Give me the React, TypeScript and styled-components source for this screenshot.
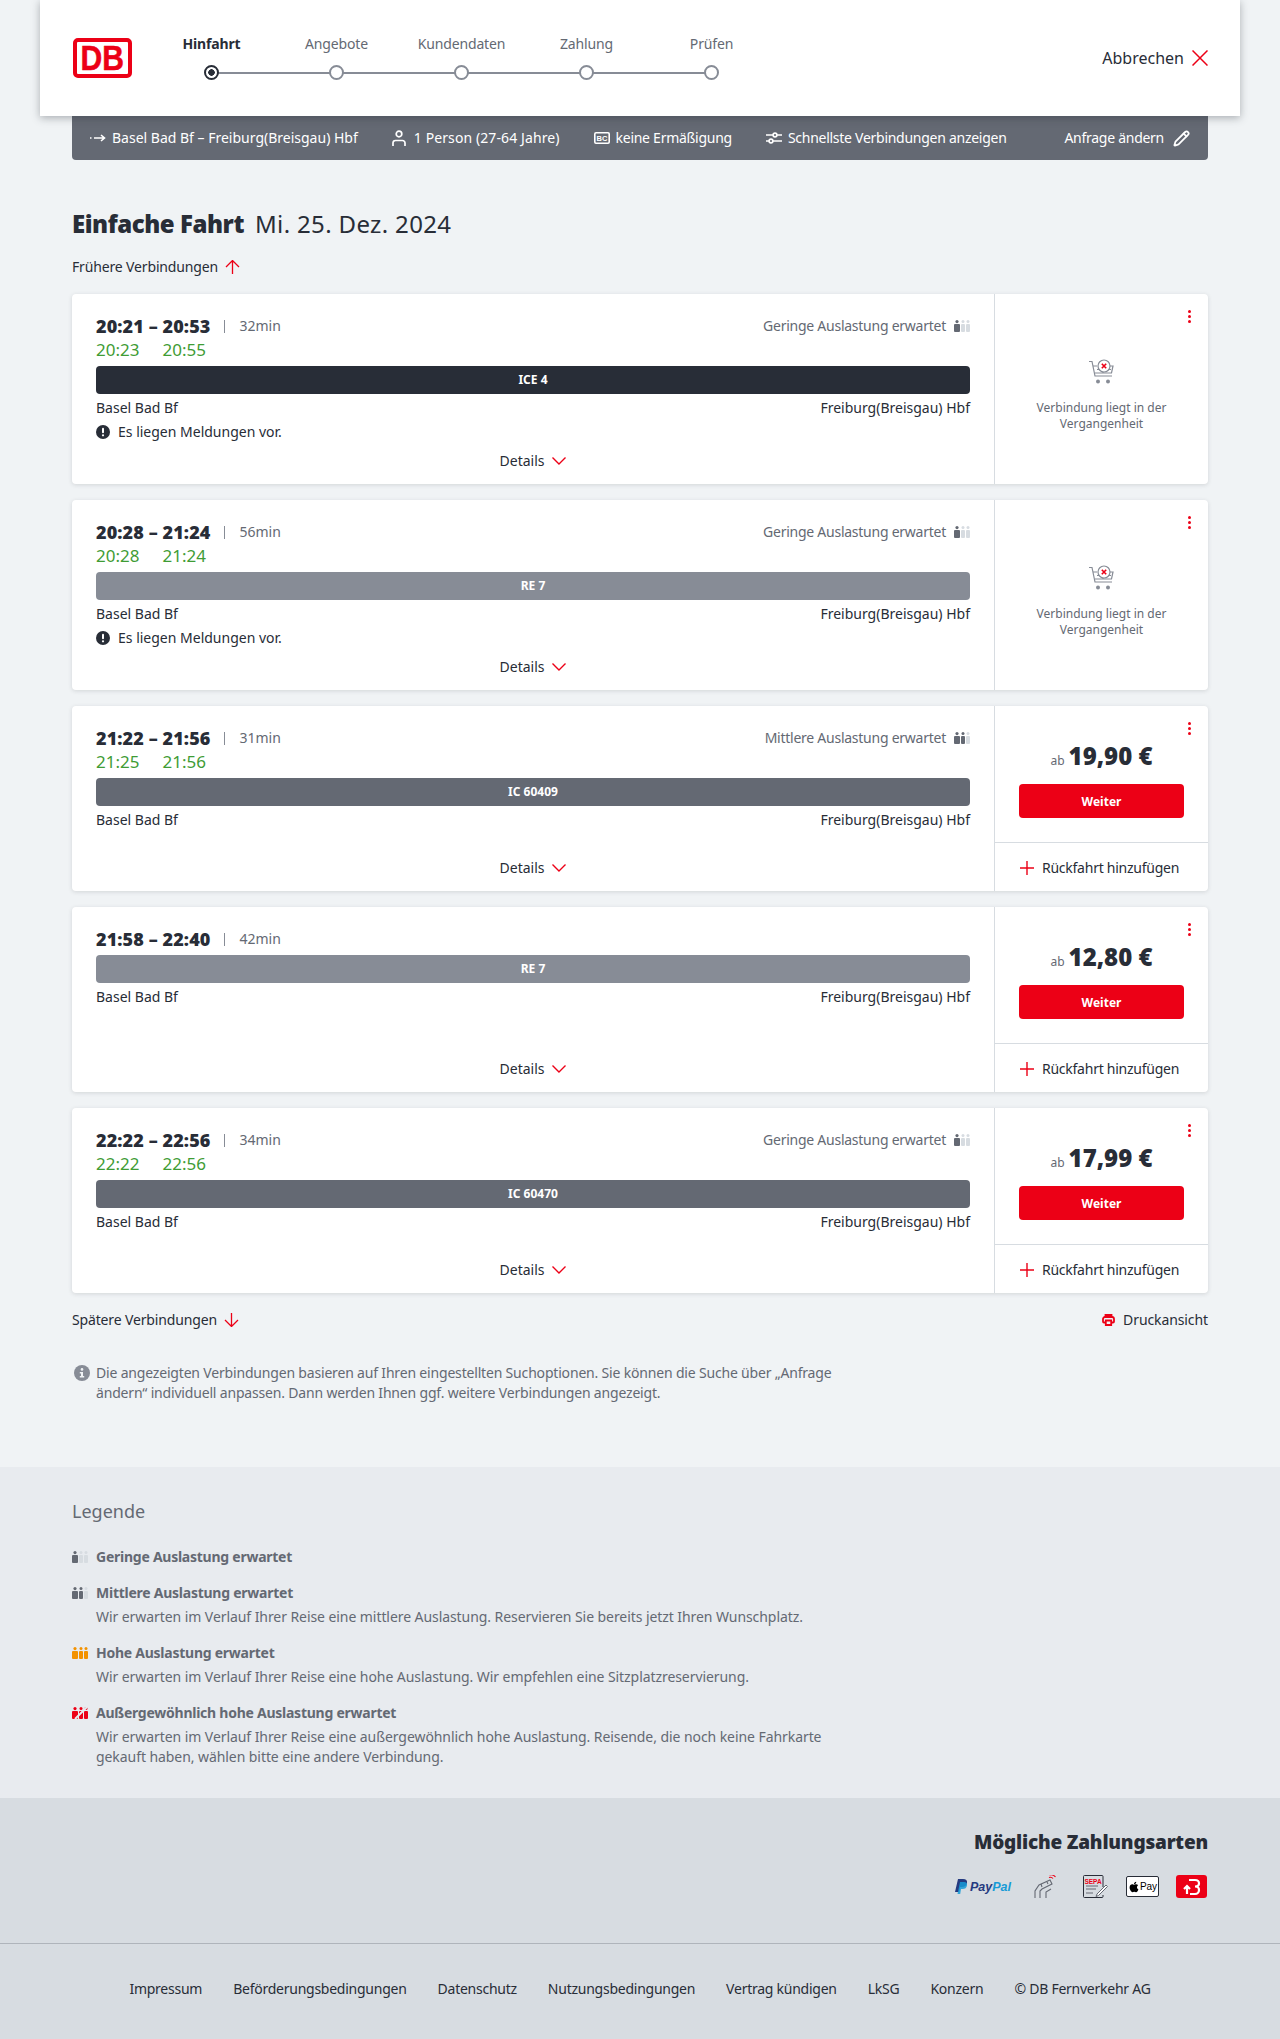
import React from 'react'
import styled, { createGlobalStyle } from 'styled-components'
import { Pencil } from 'lucide-react'
import { FaApple } from 'react-icons/fa'

const RED = '#ec0016'
const INK = '#282d37'
const GREY = '#646973'
const LINE = '#d7dce1'

const GlobalStyle = createGlobalStyle`
  body {
    margin: 0;
    background: #f0f3f5;
    color: ${INK};
    font-family: 'Noto Sans', 'Open Sans', sans-serif;
    font-size: 14px;
    line-height: 20px;
  }
`

interface Connection {
  times: string
  duration: string
  status?: string
  level?: number
  realtime?: [string, string]
  train: string
  trainColor: string
  message?: boolean
  price?: string
}

const connections: Connection[] = [
  { times: '20:21 – 20:53', duration: '32min', status: 'Geringe Auslastung erwartet', level: 1, realtime: ['20:23', '20:55'], train: 'ICE 4', trainColor: INK, message: true },
  { times: '20:28 – 21:24', duration: '56min', status: 'Geringe Auslastung erwartet', level: 1, realtime: ['20:28', '21:24'], train: 'RE 7', trainColor: '#878c96', message: true },
  { times: '21:22 – 21:56', duration: '31min', status: 'Mittlere Auslastung erwartet', level: 2, realtime: ['21:25', '21:56'], train: 'IC 60409', trainColor: GREY, price: '19,90 €' },
  { times: '21:58 – 22:40', duration: '42min', train: 'RE 7', trainColor: '#878c96', price: '12,80 €' },
  { times: '22:22 – 22:56', duration: '34min', status: 'Geringe Auslastung erwartet', level: 1, realtime: ['22:22', '22:56'], train: 'IC 60470', trainColor: GREY, price: '17,99 €' },
]

const steps = ['Hinfahrt', 'Angebote', 'Kundendaten', 'Zahlung', 'Prüfen']

const legend = [
  { title: 'Geringe Auslastung erwartet', level: 1, lines: [] },
  { title: 'Mittlere Auslastung erwartet', level: 2, lines: ['Wir erwarten im Verlauf Ihrer Reise eine mittlere Auslastung. Reservieren Sie bereits jetzt Ihren Wunschplatz.'] },
  { title: 'Hohe Auslastung erwartet', level: 3, lines: ['Wir erwarten im Verlauf Ihrer Reise eine hohe Auslastung. Wir empfehlen eine Sitzplatzreservierung.'] },
  { title: 'Außergewöhnlich hohe Auslastung erwartet', level: 4, lines: ['Wir erwarten im Verlauf Ihrer Reise eine außergewöhnlich hohe Auslastung. Reisende, die noch keine Fahrkarte', 'gekauft haben, wählen bitte eine andere Verbindung.'] },
]

const footerLinks = ['Impressum', 'Beförderungsbedingungen', 'Datenschutz', 'Nutzungsbedingungen', 'Vertrag kündigen', 'LkSG', 'Konzern', '© DB Fernverkehr AG']

function LoadIcon({ level }: { level: number }) {
  const full = level === 3 ? '#f39200' : level === 4 ? RED : GREY
  const fill = (i: number) => (i < level ? full : LINE)
  return (
    <svg width='16' height='12' viewBox='0 0 16 12'>
      <circle cx='3' cy='1.600' r='1.600' fill={fill(0)} />
      <rect x='0' y='4' width='6' height='8' rx='1' fill={fill(0)} />
      <circle cx='9' cy='1.600' r='1.500' fill={fill(1)} />
      <rect x='7' y='4' width='4' height='8' rx='1' fill={fill(1)} />
      <circle cx='14' cy='1.600' r='1.500' fill={fill(2)} />
      <rect x='12' y='4' width='4' height='8' rx='1' fill={fill(2)} />
      {level === 4 && <path d='M3 12 15 0' stroke='#e8ebef' strokeWidth='2' />}
    </svg>
  )
}

function ArrowIcon({ down }: { down?: boolean }) {
  return (
    <svg width='15' height='14' viewBox='0 0 15 14' fill='none' stroke={RED} strokeWidth='1.300'>
      {down ? <path d='M7.500 0v13M1 7l6.500 6.500L14 7' /> : <path d='M7.500 14V1M1 7l6.500-6.500L14 7' />}
    </svg>
  )
}

function CartIcon() {
  return (
    <svg width='26' height='26' viewBox='0 0 26 26' fill='none' stroke='#878c96' strokeWidth='1.200'>
      <path d='M0 2.500h3l3 14.500h17' />
      <path d='M4 7h4M18 7h6l-1.500 7H6' />
      <path d='M8 10.500h14M14 10.500V14' />
      <circle cx='15' cy='7' r='6' fill='#fff' />
      <path d='M12.800 4.800l4.400 4.400M17.200 4.800l-4.400 4.400' stroke={RED} strokeWidth='1.600' />
      <circle cx='9' cy='22.500' r='2' fill='#878c96' stroke='none' />
      <circle cx='19' cy='22.500' r='2' fill='#878c96' stroke='none' />
    </svg>
  )
}

function PastPanel() {
  return (
    <PastBox>
      <CartIcon />
      <PastText>Verbindung liegt in der<br />Vergangenheit</PastText>
    </PastBox>
  )
}

function PricePanel({ price }: { price: string }) {
  return (
    <>
      <PriceBox>
        <PriceLine><small>ab</small><strong>{price}</strong></PriceLine>
        <WeiterButton>Weiter</WeiterButton>
      </PriceBox>
      <ReturnRow>
        <svg width='14' height='14' viewBox='0 0 14 14' stroke={RED} strokeWidth='1.400'>
          <path d='M7 0v14M0 7h14' />
        </svg>
        Rückfahrt hinzufügen
      </ReturnRow>
    </>
  )
}

function ConnectionCard({ item }: { item: Connection }) {
  return (
    <Card>
      <MainCol>
        <TimeRow>
          <Times>{item.times}</Times>
          <Pipe />
          <Duration>{item.duration}</Duration>
          {item.status && (
            <Status>
              <span>{item.status}</span>
              <LoadIcon level={item.level ?? 1} />
            </Status>
          )}
        </TimeRow>
        {item.realtime && (
          <Realtime>
            <span>{item.realtime[0]}</span>
            <span>{item.realtime[1]}</span>
          </Realtime>
        )}
        <TrainBar $color={item.trainColor}>{item.train}</TrainBar>
        <Stations>
          <span>Basel Bad Bf</span>
          <span>Freiburg(Breisgau) Hbf</span>
        </Stations>
        {item.message && (
          <Message>
            <svg width='14' height='14' viewBox='0 0 14 14'>
              <circle cx='7' cy='7' r='7' fill={INK} />
              <rect x='6' y='2.800' width='2' height='5.400' rx='1' fill='#fff' />
              <circle cx='7' cy='10.300' r='1.100' fill='#fff' />
            </svg>
            Es liegen Meldungen vor.
          </Message>
        )}
        <DetailsRow>
          Details
          <svg width='14' height='8' viewBox='0 0 14 8' fill='none' stroke={RED} strokeWidth='1.400'>
            <path d='M.500.500 7 7l6.500-6.500' />
          </svg>
        </DetailsRow>
      </MainCol>
      <SideCol>
        <Kebab><i /><i /><i /></Kebab>
        {item.price ? <PricePanel price={item.price} /> : <PastPanel />}
      </SideCol>
    </Card>
  )
}

export default function App() {
  return (
    <>
      <GlobalStyle />
      <Header>
        <Logo><span>DB</span></Logo>
        <Stepper>
          {steps.map((step, i) => (
            <Step key={step} $active={i === 0} $last={i === steps.length - 1}>
              <span>{step}</span>
              <StepDot $active={i === 0} />
            </Step>
          ))}
        </Stepper>
        <CancelLink>
          Abbrechen
          <svg width='16' height='16' viewBox='0 0 16 16' stroke={RED} strokeWidth='1.500'>
            <path d='M.500.500l15 15M15.500.500l-15 15' />
          </svg>
        </CancelLink>
      </Header>

      <Page>
        <SummaryBar>
          <SummaryItem>
            <svg width='16' height='8' viewBox='0 0 16 8' fill='none' stroke='#fff' strokeWidth='1.600'>
              <path d='M0 4h1.500M4 4h10M11 1l3.500 3-3.500 3' />
            </svg>
            Basel Bad Bf – Freiburg(Breisgau) Hbf
          </SummaryItem>
          <PersonItem>
            <svg width='14' height='16' viewBox='0 0 14 16' fill='none' stroke='#fff' strokeWidth='1.700'>
              <circle cx='7' cy='4' r='2.800' />
              <path d='M1 16v-3a2.500 2.500 0 0 1 2.500-2.500h7A2.500 2.500 0 0 1 13 13v3' />
            </svg>
            <WideText>1 Person (27-64 Jahre)</WideText>
          </PersonItem>
          <SummaryItem>
            <svg width='16' height='12' viewBox='0 0 16 12'>
              <rect x='0.800' y='0.800' width='14.400' height='10.400' rx='1.200' fill='none' stroke='#fff' strokeWidth='1.600' />
              <text x='8' y='8.800' textAnchor='middle' fontFamily='Liberation Sans' fontWeight='700' fontSize='7.500' fill='#fff'>BC</text>
            </svg>
            <TightText>keine Ermäßigung</TightText>
          </SummaryItem>
          <SummaryItem>
            <svg width='16' height='12' viewBox='0 0 16 12' fill='none' stroke='#fff' strokeWidth='1.600'>
              <path d='M0 3h7M11 3h5M0 9h3M7 9h9' />
              <circle cx='9' cy='3' r='1.900' />
              <circle cx='5' cy='9' r='1.900' />
            </svg>
            <TightText>Schnellste Verbindungen anzeigen</TightText>
          </SummaryItem>
          <ChangeLink>
            <TightText>Anfrage ändern</TightText>
            <Pencil size={17} strokeWidth={2.500} />
          </ChangeLink>
        </SummaryBar>

        <Title><strong>Einfache Fahrt</strong><span>Mi. 25. Dez. 2024</span></Title>

        <PagerLink>
          <span>Frühere Verbindungen</span>
          <ArrowIcon />
        </PagerLink>

        <CardList>
          {connections.map((item) => (
            <ConnectionCard key={item.times} item={item} />
          ))}
        </CardList>

        <LaterRow>
          <PagerLink>
            <span>Spätere Verbindungen</span>
            <ArrowIcon down />
          </PagerLink>
          <PrintLink>
            <svg width='13' height='12' viewBox='0 0 13 12' fill='none' stroke={RED} strokeWidth='1.800'>
              <path d='M3 8.500H2A1 1 0 0 1 1 7.500V5a2 2 0 0 1 2-2h7a2 2 0 0 1 2 2v2.500a1 1 0 0 1-1 1h-1' />
              <path d='M3.500 3V1h6v2M3.800 6.500h5.400V11H3.800z' />
            </svg>
            Druckansicht
          </PrintLink>
        </LaterRow>

        <InfoNote>
          <svg width='16' height='16' viewBox='0 0 16 16'>
            <circle cx='8' cy='8' r='8' fill='#878c96' />
            <circle cx='8' cy='4.400' r='1.300' fill='#f0f3f5' />
            <path d='M5.800 7h3.200v4h1.200v1.400H5.800V11H7V8.400H5.800z' fill='#f0f3f5' />
          </svg>
          <p>
            Die angezeigten Verbindungen basieren auf Ihren eingestellten Suchoptionen. Sie können die Suche über „Anfrage<br />
            ändern“ individuell anpassen. Dann werden Ihnen ggf. weitere Verbindungen angezeigt.
          </p>
        </InfoNote>
      </Page>

      <LegendSection>
        <Inner>
          <LegendTitle>Legende</LegendTitle>
          <LegendList>
            {legend.map((row) => (
              <LegendItem key={row.title}>
                <LoadIcon level={row.level} />
                <div>
                  <LegendName>{row.title}</LegendName>
                  {row.lines.length > 0 && (
                    <LegendText>
                      {row.lines.map((line) => <span key={line}>{line}</span>)}
                    </LegendText>
                  )}
                </div>
              </LegendItem>
            ))}
          </LegendList>
        </Inner>
      </LegendSection>

      <PaymentSection>
        <PaymentInner>
          <PaymentTitle>Mögliche Zahlungsarten</PaymentTitle>
          <PaymentIcons>
            <PayPal>
              <svg width='13' height='15' viewBox='0 0 13 15'>
                <path d='M3 0h5c3 0 4.500 1.500 4 4-.5 2.800-2.500 4-5 4H5l-1 5H0z' fill='#253b80' />
                <path d='M5 3h4c2 0 3.500 1 3 3.500-.5 2.500-2 3.500-4.500 3.500H6l-.8 5H2.500z' fill='#179bd7' opacity='.85' />
              </svg>
              <b>Pay</b><em>Pal</em>
            </PayPal>
            <PayMark $left={23}>
              <svg width='22' height='23' viewBox='0 0 22 23' fill='none' stroke={GREY} strokeWidth='1.100'>
                <path d='M1 23v-7l4-6 11-5 2 4-10 5-2 2v7M12 23v-6l5-3' />
                <path d='M8 12l-1-3M14 9l-1-2' />
                <path d='M15 2.500a3.500 3.500 0 0 1 4 1M15.500 0a6 6 0 0 1 6 2' stroke={RED} />
              </svg>
            </PayMark>
            <PayMark $left={27}>
              <svg width='25' height='23' viewBox='0 0 25 23' fill='none' stroke={INK} strokeWidth='1'>
                <path d='M20 12V1.500A1 1 0 0 0 19 .5H1.500a1 1 0 0 0-1 1v20a1 1 0 0 0 1 1H19a1 1 0 0 0 1-1V20' />
                <text x='10' y='8.500' textAnchor='middle' fontFamily='Liberation Sans' fontWeight='700' fontSize='6.500' fill={RED} stroke='none'>SEPA</text>
                <path d='M3 11h12M3 14h10M3 18h7' stroke={GREY} />
                <path d='M14 19l9-9 1.500 1.500-9 9-2.500 1z' fill='#fff' stroke={GREY} />
              </svg>
            </PayMark>
            <ApplePay><FaApple size={12} />Pay</ApplePay>
            <BonusBadge>
              <svg width='18' height='18' viewBox='0 0 18 18' fill='none' stroke='#fff' strokeWidth='2.200'>
                <path d='M6 2h6c3 0 4 1.500 4 3.500S14.500 8.500 12 8.500c3 0 4 1.500 4 3.500s-1.500 4-4 4H7' />
                <path d='M1 11l3-3 3 3M4 9v7' />
              </svg>
            </BonusBadge>
          </PaymentIcons>
        </PaymentInner>
      </PaymentSection>

      <Footer>
        {footerLinks.map((link) => (
          <span key={link}>{link}</span>
        ))}
      </Footer>
    </>
  )
}

const Header = styled.header`
  position: relative;
  z-index: 2;
  display: flex;
  align-items: center;
  height: 116px;
  margin: 0 40px;
  padding: 0 33px;
  background: #fff;
  box-shadow: 0 2px 8px rgba(40, 45, 55, 0.35);
`

const Logo = styled.div`
  display: flex;
  flex: none;
  align-items: center;
  justify-content: center;
  box-sizing: border-box;
  width: 59px;
  height: 40px;
  border: 4px solid ${RED};
  border-radius: 5px;
  color: ${RED};
  font-family: 'Liberation Sans', sans-serif;
  font-size: 35px;
  font-weight: 700;
  line-height: 32px;
  span {
    transform: scaleX(0.86);
    -webkit-text-stroke: 0.5px ${RED};
  }
`

const Stepper = styled.div`
  display: flex;
  margin: 0 0 3px 17px;
`

const Step = styled.div<{ $active?: boolean; $last?: boolean }>`
  position: relative;
  display: flex;
  flex-direction: column;
  align-items: center;
  gap: 11px;
  width: 125px;
  letter-spacing: -0.15px;
  color: ${(p) => (p.$active ? INK : GREY)};
  font-weight: ${(p) => (p.$active ? 700 : 400)};
  &::after {
    content: '';
    display: ${(p) => (p.$last ? 'none' : 'block')};
    position: absolute;
    left: 62px;
    right: -62px;
    bottom: 6px;
    height: 2px;
    background: #878c96;
  }
`

const StepDot = styled.i<{ $active?: boolean }>`
  position: relative;
  z-index: 1;
  box-sizing: border-box;
  width: 15px;
  height: 15px;
  border: 2px solid ${(p) => (p.$active ? INK : '#878c96')};
  border-radius: 50%;
  background: ${(p) => (p.$active ? `radial-gradient(circle, ${INK} 3px, #fff 3.5px)` : '#fff')};
`

const CancelLink = styled.div`
  display: flex;
  align-items: center;
  gap: 8px;
  margin-left: auto;
  margin-right: -1px;
  font-size: 16px;
`

const Page = styled.main`
  width: 1136px;
  margin: 0 auto;
  padding-bottom: 64px;
`

const SummaryBar = styled.div`
  display: flex;
  align-items: center;
  height: 44px;
  padding: 0 24px 0 18px;
  border-radius: 0 0 4px 4px;
  background: ${GREY};
  color: #fff;
  gap: 34px;
`

const SummaryItem = styled.div`
  display: flex;
  align-items: center;
  gap: 6px;
  white-space: nowrap;
`

const PersonItem = styled(SummaryItem)`
  gap: 8px;
`

const WideText = styled.span`
  letter-spacing: 0.1px;
`

const TightText = styled.span`
  letter-spacing: -0.27px;
`

const ChangeLink = styled(SummaryItem)`
  gap: 9px;
  margin-left: auto;
  margin-right: -6px;
`

const Title = styled.h1`
  display: flex;
  gap: 11px;
  margin: 48px 0 0;
  font-size: 24px;
  line-height: 32px;
  font-weight: 400;
  strong {
    font-weight: 900;
    letter-spacing: -0.45px;
  }
  span {
    letter-spacing: 0.35px;
  }
`

const PagerLink = styled.div`
  display: flex;
  align-items: center;
  gap: 7px;
  margin-top: 17px;
  height: 20px;
  letter-spacing: -0.15px;
`

const CardList = styled.div`
  display: flex;
  flex-direction: column;
  gap: 16px;
  margin-top: 17px;
`

const Card = styled.article`
  display: flex;
  min-height: 185px;
  border-radius: 4px;
  background: #fff;
  box-shadow: 0 1px 4px rgba(40, 45, 55, 0.15);
`

const MainCol = styled.div`
  display: flex;
  flex-direction: column;
  width: 922px;
  box-sizing: border-box;
  padding: 20px 24px 13px;
`

const TimeRow = styled.div`
  display: flex;
  align-items: center;
  height: 24px;
`

const Times = styled.span`
  font-size: 18px;
  font-weight: 900;
  letter-spacing: 0.1px;
  white-space: nowrap;
`

const Pipe = styled.i`
  width: 1px;
  height: 13px;
  margin: 0 14px;
  background: #878c96;
`

const Duration = styled.span`
  color: ${GREY};
  font-size: 14px;
`

const Status = styled.span`
  display: flex;
  align-items: center;
  gap: 8px;
  margin-left: auto;
  color: ${GREY};
  letter-spacing: -0.25px;
`

const Realtime = styled.div`
  display: flex;
  gap: 23px;
  height: 24px;
  line-height: 24px;
  color: #3f9c35;
  font-size: 17px;
`

const TrainBar = styled.div<{ $color: string }>`
  height: 28px;
  margin-top: 4px;
  border-radius: 4px;
  background: ${(p) => p.$color};
  color: #fff;
  font-size: 12px;
  font-weight: 700;
  line-height: 28px;
  text-align: center;
`

const Stations = styled.div`
  display: flex;
  justify-content: space-between;
  margin-top: 4px;
`

const Message = styled.div`
  display: flex;
  align-items: center;
  gap: 8px;
  margin-top: 4px;
`

const DetailsRow = styled.div`
  display: flex;
  align-items: center;
  justify-content: center;
  gap: 8px;
  height: 20px;
  margin-top: auto;
  padding-top: 9px;
`

const SideCol = styled.aside`
  position: relative;
  display: flex;
  flex-direction: column;
  flex: 1;
  border-left: 1px solid ${LINE};
`

const Kebab = styled.div`
  position: absolute;
  top: 16px;
  right: 17px;
  display: flex;
  flex-direction: column;
  gap: 2px;
  i {
    width: 3px;
    height: 3px;
    border-radius: 50%;
    background: ${RED};
  }
`

const PastBox = styled.div`
  display: flex;
  flex-direction: column;
  align-items: center;
  padding-top: 65px;
`

const PastText = styled.p`
  margin: 15px 0 0;
  color: ${GREY};
  font-size: 12px;
  line-height: 16px;
  text-align: center;
`

const PriceBox = styled.div`
  display: flex;
  flex-direction: column;
  padding: 34px 24px 24px;
  border-bottom: 1px solid ${LINE};
`

const PriceLine = styled.div`
  display: flex;
  align-items: baseline;
  justify-content: center;
  gap: 4px;
  height: 32px;
  line-height: 32px;
  small {
    color: ${GREY};
    font-size: 12px;
  }
  strong {
    font-size: 24px;
    font-weight: 900;
  }
`

const WeiterButton = styled.button`
  height: 34px;
  margin-top: 12px;
  border: 0;
  border-radius: 4px;
  background: ${RED};
  color: #fff;
  font-family: inherit;
  font-size: 12px;
  font-weight: 700;
`

const ReturnRow = styled.div`
  display: flex;
  flex: 1;
  align-items: center;
  gap: 8px;
  padding: 1px 0 0 25px;
  white-space: nowrap;
  letter-spacing: -0.25px;
`

const LaterRow = styled.div`
  display: flex;
  justify-content: space-between;
`

const PrintLink = styled.div`
  display: flex;
  align-items: center;
  gap: 8px;
  height: 20px;
  margin-top: 17px;
  letter-spacing: -0.1px;
`

const InfoNote = styled.div`
  display: flex;
  gap: 6px;
  margin: 33px 0 0 2px;
  color: ${GREY};
  letter-spacing: -0.18px;
  svg {
    flex: none;
    margin-top: 2px;
  }
  p {
    margin: 0;
    white-space: nowrap;
  }
`

const LegendSection = styled.section`
  background: #e8ebef;
  padding: 32px 0 31px;
`

const Inner = styled.div`
  width: 1136px;
  margin: 0 auto;
`

const LegendTitle = styled.h2`
  margin: 0;
  color: ${GREY};
  font-size: 18px;
  font-weight: 400;
  line-height: 24px;
`

const LegendList = styled.div`
  display: flex;
  flex-direction: column;
  gap: 16px;
  margin-top: 24px;
`

const LegendItem = styled.div`
  display: flex;
  gap: 8px;
  svg {
    flex: none;
    margin-top: 4px;
  }
`

const LegendName = styled.div`
  color: ${GREY};
  font-weight: 700;
  letter-spacing: -0.25px;
`

const LegendText = styled.div`
  display: flex;
  flex-direction: column;
  margin-top: 4px;
  color: ${GREY};
  letter-spacing: -0.07px;
`

const PaymentSection = styled.section`
  box-sizing: border-box;
  height: 146px;
  padding-top: 30px;
  border-bottom: 1px solid #afb4bb;
  background: ${LINE};
`

const PaymentInner = styled(Inner)`
  display: flex;
  flex-direction: column;
  align-items: flex-end;
`

const PaymentTitle = styled.h2`
  margin: 0;
  font-size: 19px;
  font-weight: 900;
  line-height: 28px;
  letter-spacing: -0.2px;
`

const PaymentIcons = styled.div`
  display: flex;
  align-items: center;
  margin: 19px 1px 0 0;
`

const PayMark = styled.span<{ $left: number }>`
  display: flex;
  margin-left: ${(p) => p.$left}px;
`

const PayPal = styled.div`
  display: flex;
  align-items: center;
  gap: 2px;
  font-family: 'Liberation Sans', sans-serif;
  font-size: 12.5px;
  font-style: italic;
  font-weight: 700;
  b {
    color: #253b80;
  }
  em {
    margin-left: -2px;
    color: #179bd7;
  }
`

const ApplePay = styled.div`
  display: flex;
  align-items: center;
  justify-content: center;
  box-sizing: border-box;
  width: 33px;
  height: 21px;
  margin-left: 18px;
  border: 1px solid ${INK};
  border-radius: 2px;
  background: #fff;
  color: #000;
  font-family: 'Liberation Sans', sans-serif;
  font-size: 10px;
`

const BonusBadge = styled.div`
  display: flex;
  align-items: center;
  justify-content: center;
  width: 31px;
  height: 23px;
  margin-left: 17px;
  border-radius: 3px;
  background: ${RED};
`

const Footer = styled.footer`
  display: flex;
  justify-content: center;
  gap: 31px;
  height: 95px;
  padding-top: 35px;
  box-sizing: border-box;
  background: ${LINE};
  letter-spacing: -0.25px;
`
